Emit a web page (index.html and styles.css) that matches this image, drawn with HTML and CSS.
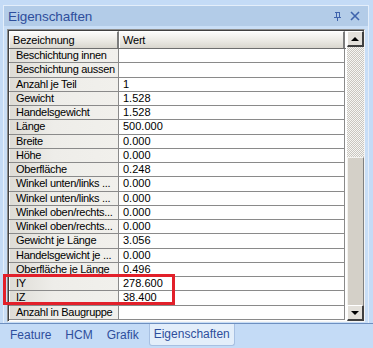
FILE: index.html
```html
<!DOCTYPE html>
<html lang="de">
<head>
  <meta charset="UTF-8" />
  <title>Eigenschaften</title>
  <link rel="stylesheet" href="styles.css">
</head>
<body>

  <div class="panel">
    <div class="panel-title">
      <span>Eigenschaften</span>
      <div class="title-icons">
        <!-- Pin -->
        <svg width="9" height="10" viewBox="0 0 9 10">
          <path d="M2 1h5M3 1v5M6 1v5M1 6h7M4.5 6v4" stroke="#3f63ad" stroke-width="1" fill="none" shape-rendering="crispEdges"/>
        </svg>
        <!-- Schließen -->
        <svg width="10" height="10" viewBox="0 0 10 10">
          <path d="M1 1L9 9M9 1L1 9" stroke="#3f63ad" stroke-width="1.6" fill="none"/>
        </svg>
      </div>
    </div>

    <div class="panel-body">
      <div class="grid-frame">
        <div class="grid">
          <div class="grid-head">
            <div class="head-cell name-col">Bezeichnung</div>
            <div class="head-cell value-col">Wert</div>
          </div>
          <div class="row"><div class="cell-name">Beschichtung innen</div><div class="cell-value"></div></div>
          <div class="row"><div class="cell-name">Beschichtung aussen</div><div class="cell-value"></div></div>
          <div class="row"><div class="cell-name">Anzahl je Teil</div><div class="cell-value">1</div></div>
          <div class="row"><div class="cell-name">Gewicht</div><div class="cell-value">1.528</div></div>
          <div class="row"><div class="cell-name">Handelsgewicht</div><div class="cell-value">1.528</div></div>
          <div class="row"><div class="cell-name">Länge</div><div class="cell-value">500.000</div></div>
          <div class="row"><div class="cell-name">Breite</div><div class="cell-value">0.000</div></div>
          <div class="row"><div class="cell-name">Höhe</div><div class="cell-value">0.000</div></div>
          <div class="row"><div class="cell-name">Oberfläche</div><div class="cell-value">0.248</div></div>
          <div class="row"><div class="cell-name">Winkel unten/links ...</div><div class="cell-value">0.000</div></div>
          <div class="row"><div class="cell-name">Winkel unten/links ...</div><div class="cell-value">0.000</div></div>
          <div class="row"><div class="cell-name">Winkel oben/rechts...</div><div class="cell-value">0.000</div></div>
          <div class="row"><div class="cell-name">Winkel oben/rechts...</div><div class="cell-value">0.000</div></div>
          <div class="row"><div class="cell-name">Gewicht je Länge</div><div class="cell-value">3.056</div></div>
          <div class="row"><div class="cell-name">Handelsgewicht je ...</div><div class="cell-value">0.000</div></div>
          <div class="row"><div class="cell-name">Oberfläche je Länge</div><div class="cell-value">0.496</div></div>
          <div class="row"><div class="cell-name">IY</div><div class="cell-value">278.600</div></div>
          <div class="row"><div class="cell-name">IZ</div><div class="cell-value">38.400</div></div>
          <div class="row"><div class="cell-name">Anzahl in Baugruppe</div><div class="cell-value"></div></div>
        </div>

        <div class="scrollbar">
          <div class="scroll-btn"><span class="arrow-up"></span></div>
          <div class="scroll-track"></div>
          <div class="scroll-thumb"></div>
          <div class="scroll-btn"><span class="arrow-down"></span></div>
        </div>
      </div>
    </div>
  </div>

  <!-- Markierung IY / IZ -->
  <div class="highlight"></div>

  <div class="tabs">
    <div class="tab">Feature</div>
    <div class="tab">HCM</div>
    <div class="tab">Grafik</div>
    <div class="tab active">Eigenschaften</div>
  </div>

</body>
</html>
```

FILE: styles.css
```css
/* Grundlayout */
* {
  margin: 0;
  padding: 0;
  box-sizing: border-box;
}
body {
  position: relative;
  width: 373px;
  height: 348px;
  overflow: hidden;
  background-color: #c4dbf6;
  font-family: "Liberation Sans", Arial, sans-serif;
  font-size: 11px;
  color: #000;
}
/* Panel mit Titelleiste */
.panel {
  margin: 5px 4px 0 3px;
  border: 1px solid #e4eefa;
  border-bottom: none;
  background-color: #c9def6;
}
.panel-title {
  display: flex;
  align-items: center;
  justify-content: space-between;
  height: 20px;
  padding: 0 8px 0 4px;
  background-color: #b3cce8;
  color: #2e4e9c;
  font-size: 13.5px;
  letter-spacing: -0.1px;
}
.title-icons {
  display: flex;
  align-items: center;
  gap: 8px;
}
.panel-body {
  padding: 3px 3px 1px 3px;
}
/* Tabelle */
.grid-frame {
  display: flex;
  height: 293px;
  border-top: 1px solid #8e8e8e;
  border-left: 1px solid #8e8e8e;
  border-right: 1px solid #f4f4f4;
  border-bottom: 1px solid #f4f4f4;
  box-shadow: inset 1px 1px 0 #404040;
  padding: 1px 0 0 1px;
  background-color: #fff;
}
.grid {
  flex: 1;
  display: flex;
  flex-direction: column;
}
.grid-head {
  display: flex;
  height: 18px;
  border-bottom: 1px solid #6e6e6e;
}
.head-cell {
  display: flex;
  align-items: center;
  padding-left: 3px;
  letter-spacing: -0.2px;
  background: linear-gradient(#fbfbfa, #e9e7e1 60%, #d9d6ce);
  border-top: 1px solid #fff;
  border-left: 1px solid #fff;
  border-right: 2px solid #7c7c7c;
}
.name-col {
  width: 110px;
}
.value-col {
  flex: 1;
  margin-right: 1px;
}
.row {
  display: flex;
  height: 14.25px;
  border-bottom: 1px solid #8a8a8a;
  margin-right: 1px;
}
.cell-name {
  width: 110px;
  padding-left: 6px;
  line-height: 13px;
  letter-spacing: -0.3px;
  white-space: nowrap;
  overflow: hidden;
  background: linear-gradient(to right, #dedcd6, #eeede9 40%, #f1f0ec);
  border-right: 1px solid #8a8a8a;
  border-left: 1px solid #fbfbfb;
}
.cell-value {
  flex: 1;
  padding-left: 4px;
  line-height: 13px;
  border-right: 1px solid #8a8a8a;
}
/* Scrollbalken */
.scrollbar {
  display: flex;
  flex-direction: column;
  width: 17px;
  margin-left: 1px;
  background-color: #d4d0c8;
}
.scroll-btn {
  display: flex;
  align-items: center;
  justify-content: center;
  height: 16px;
  background-color: #e3e0da;
  border-top: 1px solid #fff;
  border-left: 1px solid #fff;
  border-right: 2px solid #404040;
  border-bottom: 2px solid #404040;
}
.arrow-up {
  width: 0;
  height: 0;
  border-left: 4px solid transparent;
  border-right: 4px solid transparent;
  border-bottom: 4px solid #000;
}
.arrow-down {
  width: 0;
  height: 0;
  border-left: 4px solid transparent;
  border-right: 4px solid transparent;
  border-top: 4px solid #000;
}
.scroll-track {
  height: 110px;
  background-color: #f4f3f0;
  background-image: repeating-conic-gradient(#c9c6c0 0 25%, #f7f6f3 0 50%);
  background-size: 2px 2px;
}
.scroll-thumb {
  flex: 1;
  background-color: #d4d0c8;
  border-top: 1px solid #f4f3f0;
  border-left: 1px solid #f4f3f0;
  border-right: 1px solid #808080;
}
/* Rote Markierung */
.highlight {
  position: absolute;
  left: 3px;
  top: 274px;
  width: 172px;
  height: 31px;
  border: 3px solid #e2202a;
}
/* Reiter unten */
.tabs {
  display: flex;
  padding-left: 3px;
  border-top: 1px solid #6d8fc0;
  height: 25px;
}
.tab {
  padding: 4px 7px 0 7px;
  color: #2e4e9c;
  font-size: 12px;
}
.tab.active {
  margin-left: 3px;
  padding: 3px 4px 0 4px;
  height: 22px;
  background-color: #e3eefa;
  border: 1px solid #a7c0e2;
  border-top: none;
  border-radius: 0 0 3px 3px;
}
```
